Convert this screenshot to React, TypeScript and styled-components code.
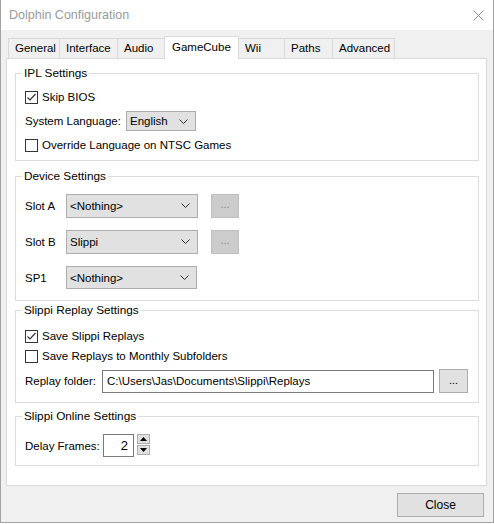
import React from 'react'
import styled, { createGlobalStyle } from 'styled-components'

const GlobalStyle = createGlobalStyle`
    html, body {
        margin: 0;
        padding: 0;
        background: #ffffff;
    }
    body {
        font-family: "Liberation Sans", Arial, sans-serif;
        font-size: 11.5px;
        color: #000000;
    }
`

const Window = styled.div`
    width: 494px;
    height: 523px;
    box-sizing: border-box;
    border: 1px solid #a3a3a3;
    border-top: none;
    background: #f0f0f0;
    display: flex;
    flex-direction: column;
`

const TitleBar = styled.div`
    height: 30px;
    flex: none;
    background: #ffffff;
    display: flex;
    align-items: center;
    justify-content: space-between;
    padding: 0 8px 0 8px;
    color: #9a9a9a;
    font-size: 12.5px;
`

const TabStrip = styled.div`
    height: 28px;
    flex: none;
    display: flex;
    align-items: flex-end;
    margin-left: 7px;
    position: relative;
    z-index: 1;
`

const Tab = styled.div<{ $width: number; $active?: boolean }>`
    width: ${(p) => p.$width}px;
    box-sizing: border-box;
    height: ${(p) => (p.$active ? 23 : 20)}px;
    margin-bottom: ${(p) => (p.$active ? -1 : 0)}px;
    margin-left: -1px;
    border: 1px solid #d9d9d9;
    border-bottom: none;
    background: ${(p) => (p.$active ? '#ffffff' : '#f0f0f0')};
    padding-left: ${(p) => (p.$active ? 7 : 6)}px;
    line-height: ${(p) => (p.$active ? 20 : 19)}px;
    white-space: nowrap;
    position: relative;
    z-index: ${(p) => (p.$active ? 2 : 1)};

    &:first-child {
        margin-left: 0;
    }
`

const Panel = styled.div`
    width: 481px;
    height: 428px;
    flex: none;
    box-sizing: border-box;
    margin-left: 5px;
    background: #ffffff;
    border: 1px solid #d9d9d9;
    padding: 7px 0 0 8px;
    display: flex;
    flex-direction: column;
`

const Group = styled.fieldset<{ $height: number; $gap: number; $pad: number; $mt: number }>`
    width: 464px;
    height: ${(p) => p.$height}px;
    box-sizing: border-box;
    margin: ${(p) => p.$mt}px 0 0 0;
    border: 1px solid #dcdcdc;
    padding: ${(p) => p.$pad}px 0 0 9px;
    display: flex;
    flex-direction: column;
    gap: ${(p) => p.$gap}px;
    min-width: 0;
`

const Legend = styled.legend`
    padding: 0 2px;
    margin-left: -3px;
    line-height: 14px;
    font-size: 11.8px;
`

const Row = styled.div<{ $height?: number; $mt?: number }>`
    height: ${(p) => p.$height ?? 20}px;
    margin-top: ${(p) => p.$mt ?? 0}px;
    display: flex;
    align-items: center;
    flex: none;
`

const Label = styled.span<{ $width: number }>`
    width: ${(p) => p.$width}px;
    white-space: nowrap;
    flex: none;
`

const Box = styled.span`
    width: 13px;
    height: 13px;
    box-sizing: border-box;
    border: 1px solid #333333;
    background: #ffffff;
    margin-right: 4px;
    display: inline-flex;
    align-items: center;
    justify-content: center;
    flex: none;
`

const Combo = styled.div<{ $width: number; $height: number }>`
    width: ${(p) => p.$width}px;
    height: ${(p) => p.$height}px;
    box-sizing: border-box;
    background: #e1e1e1;
    border: 1px solid #adadad;
    padding: 0 7px 0 3px;
    display: flex;
    align-items: center;
    justify-content: space-between;
    flex: none;
`

const MoreButton = styled.div<{ $disabled?: boolean; $width: number; $height: number }>`
    width: ${(p) => p.$width}px;
    height: ${(p) => p.$height}px;
    box-sizing: border-box;
    margin-left: ${(p) => (p.$disabled ? 13 : 5)}px;
    background: ${(p) => (p.$disabled ? '#cccccc' : '#e1e1e1')};
    border: 1px solid ${(p) => (p.$disabled ? '#bfbfbf' : '#adadad')};
    color: ${(p) => (p.$disabled ? '#8a8a8a' : '#000000')};
    display: flex;
    align-items: center;
    justify-content: center;
    padding-bottom: 3px;
    font-size: 11px;
    flex: none;
`

const TextField = styled.div<{ $width: number }>`
    width: ${(p) => p.$width}px;
    height: 23px;
    box-sizing: border-box;
    border: 1px solid #7a7a7a;
    background: #ffffff;
    padding: 0 4px;
    display: flex;
    align-items: center;
    white-space: nowrap;
    overflow: hidden;
    flex: none;
`

const NumberField = styled(TextField)`
    justify-content: flex-end;
    padding-right: 5px;
    font-size: 13px;
`

const Spinner = styled.div`
    margin-left: 3px;
    display: flex;
    flex-direction: column;
    gap: 1px;
    padding-bottom: 2px;
`

const SpinButton = styled.div`
    width: 13px;
    height: 10px;
    box-sizing: border-box;
    background: #e1e1e1;
    border: 1px solid #adadad;
    display: flex;
    align-items: center;
    justify-content: center;
`

const Footer = styled.div`
    flex: none;
    display: flex;
    justify-content: flex-end;
    padding: 7px 9px 0 0;
`

const Button = styled.div`
    width: 87px;
    height: 24px;
    box-sizing: border-box;
    background: #e1e1e1;
    border: 1px solid #adadad;
    display: flex;
    align-items: center;
    justify-content: center;
    font-size: 12px;
`

const Chevron = () => (
    <svg width="9" height="5" viewBox="0 0 9 5">
        <polyline points="0.5,0.5 4.5,4.5 8.5,0.5" fill="none" stroke="#333" strokeWidth="1" />
    </svg>
)

const Check: React.FC<{ checked?: boolean }> = ({ checked }) => (
    <Box>
        {checked && (
            <svg width="11" height="11" viewBox="0 0 11 11">
                <polyline points="1.5,5.5 4,8 9.5,2" fill="none" stroke="#333" strokeWidth="1.2" />
            </svg>
        )}
    </Box>
)

const TABS = [
    { label: 'General', width: 52 },
    { label: 'Interface', width: 59 },
    { label: 'Audio', width: 48 },
    { label: 'GameCube', width: 75, active: true },
    { label: 'Wii', width: 47 },
    { label: 'Paths', width: 49 },
    { label: 'Advanced', width: 63 },
]

const DEVICES = [
    { slot: 'Slot A', value: '<Nothing>', more: true, width: 132 },
    { slot: 'Slot B', value: 'Slippi', more: true, width: 132 },
    { slot: 'SP1', value: '<Nothing>', more: false, width: 131 },
]

const App: React.FC = () => {
    return (
        <>
            <GlobalStyle />
            <Window>
                <TitleBar>
                    <span>Dolphin Configuration</span>
                    <svg width="11" height="11" viewBox="0 0 11 11" style={{ marginRight: 1 }}>
                        <path d="M0.5 0.5 L10.5 10.5 M10.5 0.5 L0.5 10.5" stroke="#8a8a8a" strokeWidth="1" />
                    </svg>
                </TitleBar>

                <TabStrip>
                    {TABS.map((t) => (
                        <Tab key={t.label} $width={t.width} $active={t.active}>
                            {t.label}
                        </Tab>
                    ))}
                </TabStrip>

                <Panel>
                    {/* IPL */}
                    <Group $height={95} $gap={4} $pad={7} $mt={0}>
                        <Legend>IPL Settings</Legend>
                        <Row>
                            <Check checked />
                            Skip BIOS
                        </Row>
                        <Row>
                            <Label $width={101}>System Language:</Label>
                            <Combo $width={70} $height={20}>
                                English
                                <Chevron />
                            </Combo>
                        </Row>
                        <Row>
                            <Check />
                            Override Language on NTSC Games
                        </Row>
                    </Group>

                    {/* devices */}
                    <Group $height={132} $gap={13} $pad={11} $mt={8}>
                        <Legend>Device Settings</Legend>
                        {DEVICES.map((d) => (
                            <Row key={d.slot} $height={23}>
                                <Label $width={41}>{d.slot}</Label>
                                <Combo $width={d.width} $height={d.more ? 24 : 23}>
                                    {d.value}
                                    <Chevron />
                                </Combo>
                                {d.more && (
                                    <MoreButton $disabled $width={28} $height={24}>
                                        ...
                                    </MoreButton>
                                )}
                            </Row>
                        ))}
                    </Group>

                    {/* replays */}
                    <Group $height={100} $gap={0} $pad={9} $mt={2}>
                        <Legend>Slippi Replay Settings</Legend>
                        <Row>
                            <Check checked />
                            Save Slippi Replays
                        </Row>
                        <Row>
                            <Check />
                            Save Replays to Monthly Subfolders
                        </Row>
                        <Row $height={24} $mt={3}>
                            <Label $width={77}>Replay folder:</Label>
                            <TextField $width={332}>C:\Users\Jas\Documents\Slippi\Replays</TextField>
                            <MoreButton $width={29} $height={24}>
                                ...
                            </MoreButton>
                        </Row>
                    </Group>

                    {/* online */}
                    <Group $height={57} $gap={0} $pad={11} $mt={6}>
                        <Legend>Slippi Online Settings</Legend>
                        <Row $height={23}>
                            <Label $width={78}>Delay Frames:</Label>
                            <NumberField $width={31}>2</NumberField>
                            <Spinner>
                                <SpinButton>
                                    <svg width="7" height="4" viewBox="0 0 7 4">
                                        <polygon points="0,4 3.5,0 7,4" fill="#000" />
                                    </svg>
                                </SpinButton>
                                <SpinButton>
                                    <svg width="7" height="4" viewBox="0 0 7 4">
                                        <polygon points="0,0 3.5,4 7,0" fill="#000" />
                                    </svg>
                                </SpinButton>
                            </Spinner>
                        </Row>
                    </Group>
                </Panel>

                <Footer>
                    <Button>Close</Button>
                </Footer>
            </Window>
        </>
    )
}

export default App
